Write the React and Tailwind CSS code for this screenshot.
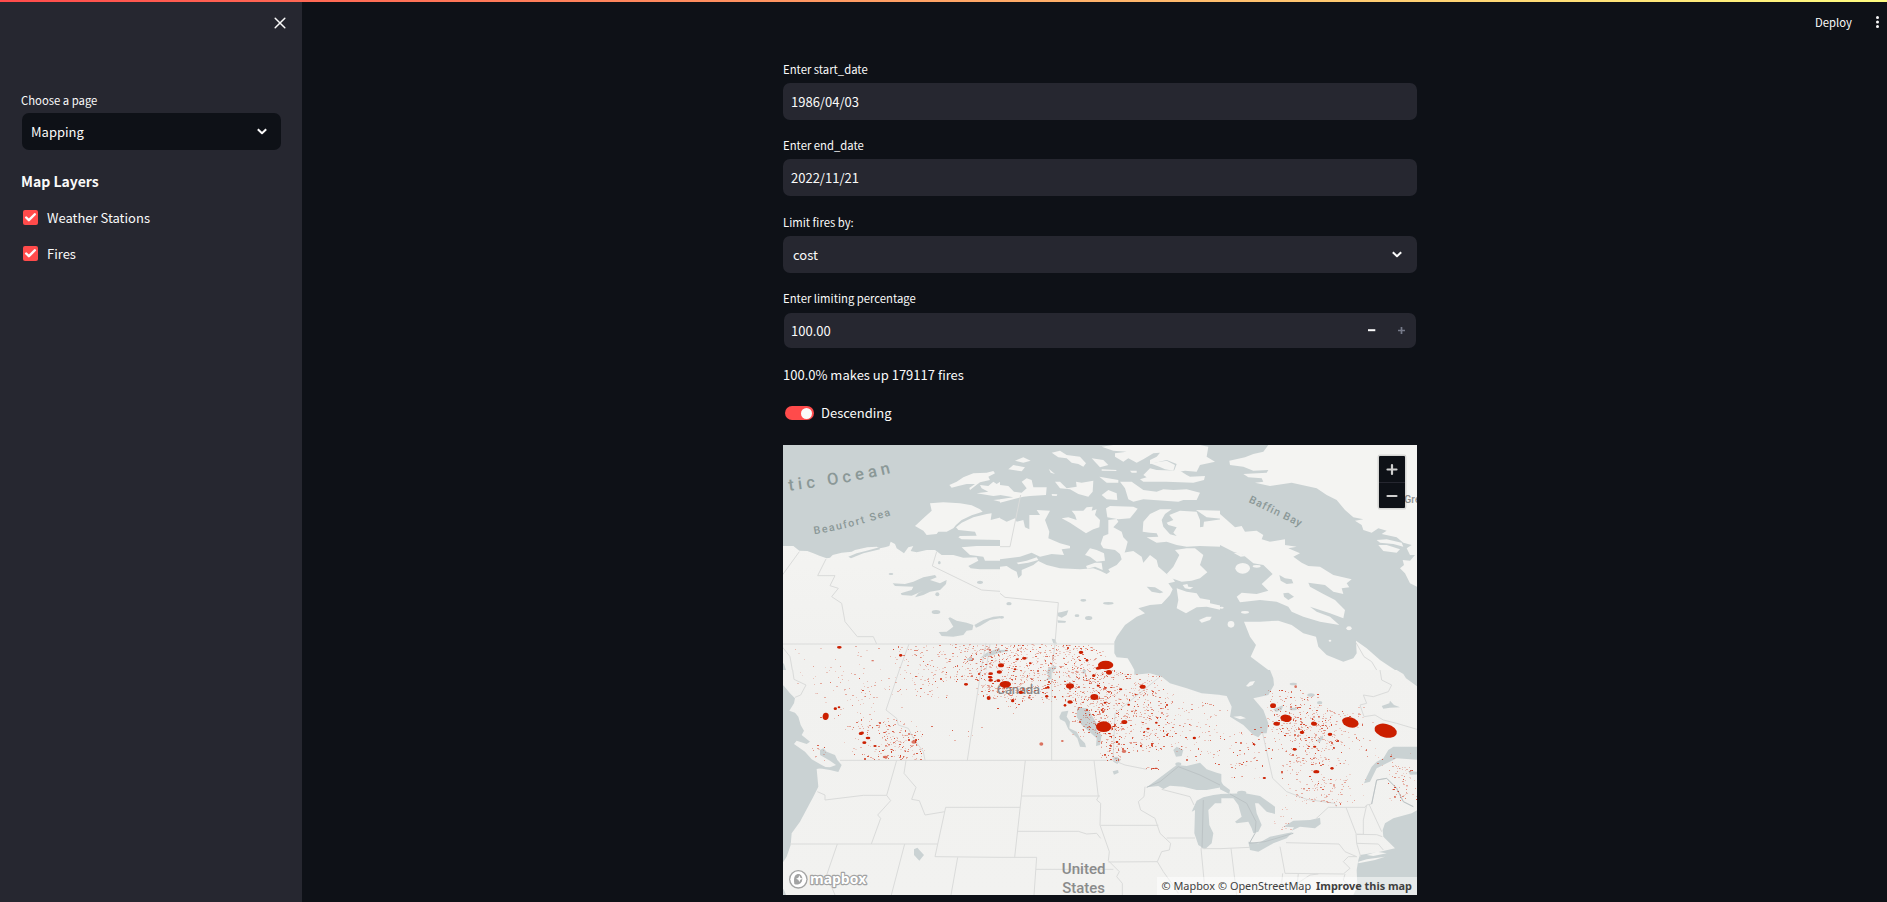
import { Check } from "lucide-react";

const WATER = "#cad2d3";
const LAND = "#f4f4f2";

// Closed outlines, each from an "x,y x,y" list
function Shapes({ fill, list }) {
  return list.map((points, i) => <polygon key={i} points={points} fill={fill} />);
}

function Lines({ list, stroke = "#dadbda", width = 3 }) {
  return list.map((points, i) => (
    <polyline key={i} points={points} fill="none" stroke={stroke} strokeWidth={width} strokeLinejoin="round" />
  ));
}

function Ponds({ list, fill = WATER }) {
  return list.map(([cx, cy, rx, ry], i) => <ellipse key={i} cx={cx} cy={cy} rx={rx} ry={ry} fill={fill} />);
}

// The map is cut in six tiles, each with its own origin
const northWest = {
  water: [
    "0,0 664,0 664,388 600,388 572,385 565,378 595,362 590,352 550,353 520,345 485,345 465,330 440,330 410,337 392,333 400,318 385,322 372,340 350,325 345,312 332,305 328,318 315,322 300,325 290,320 262,322 225,330 215,335 185,338 158,345 150,353 140,355 120,348 100,340 82,333 58,332 40,318 0,318",
    "205,350 230,340 260,332 298,322 300,328 250,340 213,355",
    "338,430 375,432 400,425 430,412 465,405 470,412 450,420 480,430 500,420 498,432 480,450 450,455 430,465 405,472 415,460 430,452 395,467 365,465 362,460 395,450 400,440 345,438",
    "476,576 500,575 520,560 505,535 510,532 530,542 560,548 580,555 577,570 560,572 550,585 520,590 485,588",
    "583,555 610,540 640,530 664,528 664,534 630,540 600,558 588,563",
    "600,654 620,638 650,627 664,625 664,636 640,645 615,650",
    "0,660 12,672 18,690 0,690",
  ],
  land: [
    "405,258 430,235 455,212 450,190 490,187 540,190 575,196 600,208 608,215 575,226 545,240 528,255 520,265 500,275 475,275 470,282 440,285 430,272",
    "528,262 545,248 580,232 620,222 635,220 632,240 664,232 664,300 545,298 535,292 540,288 590,287 585,275 535,270",
    "545,322 590,318 664,318 664,362 615,362 610,350 570,345",
    "508,135 530,125 550,112 580,100 620,98 640,93 645,100 625,110 630,120 600,127 570,150 568,144 585,132 560,132 535,138 515,143",
    "590,160 625,155 605,145 600,135 625,138 640,125 650,132 664,123 664,165 640,168",
    "640,180 664,178 664,186",
  ],
  ponds: [[333, 402, 7, 3], [472, 463, 6, 6], [600, 427, 9, 5], [478, 368, 4, 5], [468, 516, 13, 6], [570, 658, 9, 5]],
  lines: [
    "0,415 58,335",
    "138,357 113,407 165,407 150,437 175,445 155,470 185,490 195,545 232,590 280,590 290,612",
    "0,612 660,612",
    "470,335 457,378 605,450 660,454",
    "387,612 358,690",
    "0,612 30,650 37,690",
    "618,690 630,612",
  ],
};

const north = {
  water: ["0,0 664,0 664,690 0,690"],
  land: [
    "0,380 20,378 35,388 50,395 55,415 65,405 65,390 100,375 115,363 140,375 180,385 240,388 280,385 300,392 320,402 330,395 325,388 350,375 365,358 360,342 370,338 400,333 425,350 430,368 450,345 470,360 475,380 500,402 515,410 525,425 505,430 518,448 510,465 485,492 450,495 415,505 435,520 410,530 375,555 350,590 343,605 343,640 350,652 383,655 395,675 403,690 0,690",
    "0,235 20,245 45,235 50,245 70,240 75,262 88,268 88,225 120,225 110,210 150,212 135,240 148,275 145,295 180,310 210,318 210,325 185,328 192,345 155,342 120,350 95,338 60,350 0,358",
    "50,368 80,362 110,352 115,360 85,368 55,373",
    "255,345 270,325 290,330 312,340 315,362 290,365 270,350",
    "258,378 285,368 305,368 308,390 285,380 262,386",
    "185,235 205,232 230,240 225,225 215,212 250,212 260,202 278,200 275,212 290,208 285,225 300,240 298,262 280,268 258,280 235,265 210,248",
    "318,205 330,198 400,200 413,206 390,235 355,238 322,232",
    "325,240 350,237 355,245 340,262 365,275 370,292 383,305 378,325 370,350 345,330 310,325 302,312 310,288 325,282",
    "428,275 430,245 450,222 480,208 515,208 495,222 485,240 490,260 510,283 530,288 520,278 530,262 505,255 500,248 520,240 508,225 540,212 590,215 600,240 600,262 610,260 612,245 664,238 664,320 600,318 560,320 530,315 500,305 470,308 440,292 475,290 470,280 450,278",
    "588,210 664,212 664,236 620,232",
    "500,402 520,380 538,345 525,330 560,325 585,325 610,345 605,360 600,375 622,397 600,415 575,422 545,425 515,415",
    "530,445 560,455 590,460 600,475 630,480 630,490 664,497 664,510 620,500 590,502 558,520 530,505 535,480",
    "597,540 620,530 635,530 630,540 605,548",
    "548,435 562,432 565,440 580,442 570,448 555,445",
    "420,118 440,112 430,105 450,85 470,90 540,92 560,105 570,110 615,108 612,120 580,128 500,125 430,125",
    "360,125 395,125 430,150 470,155 490,148 520,150 560,148 600,158 590,180 550,180 535,185 430,178 400,185 385,178 375,145",
    "305,20 340,15 600,15 625,20 620,50 645,65 600,75 590,95 555,92 520,98 530,72 500,60 450,72 450,60 470,50 480,38 460,40 430,58 410,68 385,55 370,65 345,50 345,40 380,35 340,32",
    "450,70 500,62 525,75 520,92 495,88 478,80",
    "155,38 180,32 200,45 240,50 258,70 250,80 235,72 215,68 200,55 175,52",
    "275,55 310,60 325,75 300,82",
    "45,62 70,52 92,62 70,68",
    "25,88 40,75 75,82 65,94",
    "305,88 350,90 348,93 305,92",
    "298,110 355,120 355,128 320,128",
    "0,135 25,138 42,155 65,158 80,145 65,125 80,115 95,120 100,142 140,142 138,165 90,168 70,170 0,188 0,178 40,172 0,165",
    "165,125 180,125 200,145 230,140 228,125 245,128 280,122 278,155 265,170 235,162 210,148 180,145",
    "305,165 325,150 350,160 352,180 320,178",
    "146,86 165,102 152,98",
    "155,162 172,163 170,168 156,167",
    "390,92 410,92 410,98 395,98",
  ],
  lakes: [
    "440,440 465,442 490,457 480,460 455,455",
    "172,518 185,516 205,511 200,525 185,533 173,528",
    "172,541 198,543 196,548 174,548",
    "155,596 165,598 171,612 160,610",
    "140,700 145,684 165,677 170,680 156,700 154,716 135,722 148,708",
    "0,630 22,629 25,634 0,638",
  ],
  ponds: [[27, 491, 8, 5], [250, 481, 9, 4], [325, 490, 16, 4], [231, 527, 7, 4], [266, 534, 11, 6], [5, 532, 7, 4]],
  lines: ["0,460 15,472 175,488 165,612", "62,165 30,320 0,320", "0,612 343,612", "165,612 155,690"],
};

const northEast = {
  water: ["0,0 600,0 600,690 0,690"],
  land: [
    "145,15 130,35 100,42 75,52 28,62 30,75 70,80 100,92 145,90 140,98 70,102 85,112 125,115 130,125 105,128 150,138 215,128 290,145 320,165 350,180 375,210 400,232 430,238 405,242 425,255 430,270 455,278 475,265 500,272 485,282 530,292 550,308 575,315 560,325 570,345 585,345 570,362 548,360 552,375 540,385 555,400 570,430 600,445 600,0 145,0",
    "470,300 500,298 545,308 550,320 520,312 480,308",
    "475,315 500,315 540,328 530,338 490,333",
    "0,222 18,238 45,262 65,258 75,275 110,272 130,285 125,298 150,305 195,298 195,315 230,320 205,325 240,340 220,350 245,368 265,378 300,380 340,405 395,418 380,430 388,442 365,445 370,462 340,455 315,435 265,428 270,440 310,462 345,480 375,510 370,535 330,520 270,500 290,515 330,530 358,555 300,545 250,530 215,515 205,500 170,485 120,480 60,487 50,470 65,458 110,462 145,452 125,432 158,402 130,375 100,370 70,345 40,335 0,315",
    "72,545 120,545 175,542 215,555 250,580 288,590 295,620 320,645 370,665 400,655 410,640 408,602 440,625 480,660 525,690 145,690 92,650 108,615 90,590",
    "40,338 60,340 78,348 62,350",
  ],
  lakes: ["178,405 195,415 215,418 220,430 200,432 182,422", "190,460 205,458 222,470 205,480 192,470"],
  ponds: [[20, 344, 5, 2], [50, 352, 5, 2]],
  islands: [[68, 385, 22, 16], [110, 379, 12, 4], [75, 517, 12, 4], [33, 553, 10, 10], [387, 565, 8, 6], [330, 602, 4, 3], [5, 503, 6, 3]],
  lines: ["408,608 432,650 455,665 470,690"],
};

const southWest = {
  water: [
    "0,40 12,48 30,70 45,85 42,100 28,122 45,128 55,140 62,165 72,182 65,195 90,215 80,222 50,212 42,222 75,245 95,268 125,285 138,292 110,297 115,350 100,380 60,455 35,490 32,525 20,560 0,590",
    "120,240 130,235 140,245 165,255 172,270 185,285 175,306 150,300 118,295 118,290 150,292 168,285 150,272 120,255",
    "402,538 412,533 432,555 418,572 402,555",
    "0,645 12,660 18,675 0,675",
  ],
  land: [],
  ponds: [],
  lines: [
    "180,271 660,271",
    "358,0 318,120 350,145 355,165 385,175 400,205 430,245 435,271",
    "38,0 42,28 78,45 62,75 45,82",
    "350,271 320,376 250,376 135,390 135,375 112,365",
    "320,376 332,392 293,435 302,445 274,522",
    "378,271 372,310 408,352 395,388 418,392 435,435 495,425",
    "660,412 497,412 465,560 660,562",
    "30,522 473,522",
    "172,522 140,615 165,675",
    "374,522 334,675",
    "533,562 513,675",
    "618,-80 603,0 562,271",
  ],
};

const south = {
  water: [
    "403,0 403,14 450,10 485,20 510,40 560,55 605,70 664,75 664,0",
    "232,112 262,115 272,130 290,160 290,180 305,195 300,225 288,228 290,205 262,180 245,165 230,140",
    "178,140 185,125 205,122 200,140 210,155 208,175 230,185 240,205 255,220 258,232 240,230 232,205 205,178 195,155 180,148",
    "520,240 530,230 550,240 545,258 528,260",
    "440,352 470,330 510,300 530,285 560,288 600,278 620,298 650,308 664,312 664,352 620,360 590,360 550,350 510,347 490,357 475,348",
    "575,425 590,392 610,382 640,375 664,372 664,400 645,400 625,420 628,465 640,490 635,520 615,538 595,525 583,490 585,420",
    "338,262 352,260 362,270 352,282 340,275",
    "338,304 354,300 356,308 342,314",
    "248,0 258,0 256,10 248,12",
  ],
  land: [],
  ponds: [[535, 282, 9, 5]],
  lines: [
    "155,0 155,271",
    "0,271 340,271 340,250",
    "340,271 375,285 440,298",
    "340,250 345,130 480,20",
    "76,271 44,562",
    "66,378 300,378",
    "282,271 295,380 290,390 302,400 300,465 328,545 325,572 358,605 350,620 367,640 367,675",
    "0,412 60,412",
    "52,484 235,484 260,492 290,490 302,505",
    "0,562 110,562 102,675",
    "108,598 340,598",
    "302,466 475,466",
    "435,350 432,380 415,395 422,420 465,445 480,490 512,520 508,540 485,545 472,575 325,576",
    "485,358 570,380 582,405",
    "500,504 585,504",
    "603,535 613,640",
    "472,575 490,605 515,640 535,670",
    "608,536 660,536",
  ],
  coastLines: ["440,352 480,335 535,290 600,315 660,345", "610,390 606,535"],
};

const southEast = {
  water: [
    "0,0 0,75 20,78 35,110 30,140 70,165 100,195 115,202 125,190 140,190 145,160 130,120 100,85 145,75 162,45 160,25 150,0",
    "530,0 550,12 558,25 600,55 600,0",
    "432,340 440,320 455,290 470,275 490,265 505,240 520,230 600,230 600,270 530,265 500,280 470,295 450,335",
    "600,415 575,430 520,445 495,460 488,480 490,500 525,535 480,545 420,555 415,570 410,600 412,650 400,675 600,675",
    "0,330 10,345 30,360 28,372 0,358",
    "0,372 75,370 120,378 165,410 165,432 140,425 115,400 105,400 110,430 125,465 115,485 100,490 95,475 85,455 50,460 45,455 65,440 55,405 40,385 0,385",
    "85,515 115,520 150,500 200,490 218,487 200,505 160,520 115,545 90,540",
    "190,470 220,452 270,450 300,443 302,462 285,475 240,470 215,482 222,472",
    "565,303 591,305 600,313 570,314",
    "485,108 508,100 510,92 522,105 540,112 510,113 490,116",
    "290,212 308,196 310,204 298,218",
    "160,118 190,105 185,120 168,126",
  ],
  land: ["415,575 440,568 495,560 465,570 415,580", "78,48 90,35 105,33 98,45 85,50", "40,140 62,138 78,145 60,148", "440,555 470,545 500,550 460,558"],
  ponds: [[220, 42, 11, 4], [273, 75, 11, 5], [299, 98, 8, 5], [220, 117, 11, 4], [65, 368, 14, 6]],
  lines: [
    "128,190 158,325 200,365 260,388 345,400 350,412",
    "287,447 325,412 435,412 440,405 455,402 470,330 500,325 530,355 550,395 580,410",
    "378,412 408,490 410,520 422,560",
    "440,405 430,450 430,493 410,493",
    "448,405 485,485",
    "410,493 470,494 487,500",
    "410,520 475,522 490,540",
    "198,518 357,522 375,545 410,560 385,560 370,575 390,595 370,612 195,610 180,530",
    "33,535 50,675",
    "0,536 90,532",
    "188,610 185,640 165,655",
    "235,610 232,640 270,615 295,612",
    "480,0 485,30 515,45 505,65 460,80 430,75 440,100 420,105 432,140 465,135 490,150 530,160 591,178",
    "375,612 370,630 395,655",
  ],
  coastLines: ["30,372 80,400 108,455 105,490 88,520 135,515 220,490", "455,402 470,330 500,325 530,355 550,395 580,410"],
};

const TILES = [
  [northWest, 0, 0],
  [north, 660, 0],
  [northEast, 1320, 0],
  [southWest, 0, 690],
  [south, 660, 690],
  [southEast, 1320, 690],
];

// Largest fires, in whole-map units: cx, cy, rx, ry, tilt
const BIG_FIRES = [
  [977, 675, 23, 13, 0], [961, 683, 14, 5, -12], [971, 860, 23, 16, 0], [1711, 847, 25, 15, 15], [1817, 872, 34, 20, 14],
  [1518, 835, 17, 11, 8], [1490, 851, 10, 6, 5], [1479, 797, 9, 7, 0], [1602, 851, 9, 6, 10], [1566, 877, 7, 5, 0],
  [1650, 883, 7, 5, 0], [1544, 928, 6, 4, 0], [1609, 995, 9, 5, 0], [1656, 985, 5, 4, 0], [1453, 1014, 5, 3, 0], [1604, 920, 5, 3, 0],
  [676, 733, 17, 10, 0], [870, 738, 12, 8, 0], [943, 771, 12, 9, 0], [1033, 846, 9, 6, 0], [1088, 740, 9, 6, 0],
  [987, 697, 9, 7, 0], [870, 786, 8, 5, 0], [903, 637, 7, 5, 0], [137, 829, 9, 11, 10], [244, 880, 8, 5, -10],
  [264, 894, 7, 4, 0], [253, 908, 6, 4, 0], [285, 918, 5, 3, 0], [178, 622, 7, 4, 0], [362, 646, 5, 4, 0],
  [558, 733, 6, 4, 0], [632, 701, 7, 4, 0], [631, 712, 6, 4, 0], [632, 721, 7, 4, 0], [626, 774, 6, 6, 0], [733, 655, 7, 4, 0],
  [663, 676, 9, 6, 0], [658, 696, 8, 5, 0], [655, 722, 6, 4, 0], [722, 757, 7, 5, 0], [698, 782, 5, 5, 0], [800, 769, 5, 4, 0],
  [804, 742, 4, 4, 0], [1129, 848, 4, 3, 0], [1104, 866, 5, 3, 0], [166, 806, 5, 4, 0], [177, 802, 4, 3, 0], [1046, 794, 4, 3, 0],
  [1022, 748, 5, 3, 0], [941, 707, 5, 4, 0], [921, 661, 4, 4, 0], [955, 737, 5, 3, 0], [855, 796, 4, 4, 0], [1243, 894, 5, 4, 0],
  [1011, 906, 4, 3, 0], [975, 788, 4, 3, 0], [1421, 912, 3, 3, 0], [712, 658, 4, 3, 0], [751, 670, 4, 3, 0], [705, 688, 4, 3, 0],
];
const PALE_FIRES = [[402, 906, 8, 5], [316, 951, 8, 4], [784, 912, 6, 5], [1032, 934, 7, 5], [847, 903, 4, 3], [1547, 740, 4, 4], [748, 773, 4, 3], [278, 662, 4, 2]];

// Fire density zones: x, y, width, height, count, share of strong marks
const ZONES = [
  [20, 612, 340, 120, 45, 0.1], [100, 720, 260, 150, 70, 0.1], [200, 840, 235, 118, 130, 0.3], [310, 870, 125, 88, 75, 0.4],
  [75, 910, 70, 50, 12, 0.3], [340, 612, 160, 160, 110, 0.2], [470, 612, 180, 110, 140, 0.25], [590, 612, 230, 165, 430, 0.25],
  [640, 760, 120, 60, 25, 0.3], [780, 612, 190, 175, 320, 0.22], [890, 690, 160, 180, 270, 0.35], [860, 770, 120, 120, 70, 0.25],
  [955, 850, 70, 110, 100, 0.4], [1000, 745, 190, 190, 250, 0.3], [1130, 780, 200, 180, 100, 0.25], [1020, 700, 120, 70, 60, 0.15],
  [1300, 860, 170, 160, 70, 0.3], [1460, 750, 150, 150, 170, 0.4], [1500, 810, 210, 165, 230, 0.28], [1590, 800, 190, 140, 80, 0.2],
  [1520, 1015, 170, 75, 80, 0.06], [1820, 975, 90, 110, 60, 0.2], [1480, 1100, 70, 70, 15, 0.05], [1600, 1000, 170, 95, 45, 0.07],
  [1760, 940, 140, 55, 20, 0.2], [1100, 980, 45, 9, 12, 0.7], [500, 860, 150, 80, 7, 0.2], [1470, 950, 150, 80, 25, 0.1],
];

function scatter() {
  let seed = 42;
  const next = () => {
    seed = (seed * 1664525 + 1013904223) >>> 0;
    return seed / 4294967296;
  };
  const marks = [];
  ZONES.forEach(([x, y, w, h, count, strong]) => {
    for (let i = 0; i < count; i++) {
      // Two draws per axis soften the sides of each zone
      const across = ((next() + next()) / 2 - 0.5) * 1.2 + 0.5;
      const isStrong = next() < strong;
      marks.push({
        x: Math.round((x + across * w) / 3) * 3,
        y: Math.round((y + next() * h) / 3) * 3,
        w: next() < 0.4 ? 6 : 3,
        h: isStrong && next() < 0.15 ? 6 : 3,
        o: isStrong ? 0.4 + next() * 0.4 : 0.12 + next() * 0.25,
      });
    }
  });
  return marks;
}

const MARKS = scatter();

function FireMap() {
  return (
    <svg className="block h-[450px] w-[634px]" viewBox="9 15 1902 1350">
      <defs>
        <path id="arctic" d="M27,152 Q190,135 370,90" />
        <path id="beaufort" d="M103,283 Q200,268 345,222" />
        <path id="baffin" d="M1405,186 L1600,280" />
        <linearGradient id="ground" x1="0" y1="0" x2="0" y2="1">
          <stop offset="0" stopColor="#f6f6f4" />
          <stop offset=".45" stopColor="#f1f1ef" />
          <stop offset="1" stopColor="#f2f2f0" />
        </linearGradient>
      </defs>
      <rect x="0" y="0" width="1920" height="1380" fill="url(#ground)" />
      {TILES.map(([tile, x, y], i) => (
        <g key={i} transform={`translate(${x} ${y})`}>
          <Shapes fill={WATER} list={tile.water} />
          <Shapes fill={LAND} list={tile.land} />
          <Shapes fill={WATER} list={tile.lakes || []} />
          <Ponds list={tile.ponds} />
          <Ponds list={tile.islands || []} fill={LAND} />
          <Lines list={tile.lines} />
          <Lines list={tile.coastLines || []} stroke="#bcc3c5" />
        </g>
      ))}
      <g fontFamily="Roboto, sans-serif" fontWeight="500" fill="#8a9897">
        <text fontSize="50" letterSpacing="12.5"><textPath href="#arctic">tic Ocean</textPath></text>
        <text fontSize="32" letterSpacing="4.6"><textPath href="#beaufort">Beaufort Sea</textPath></text>
        <text fontSize="32" letterSpacing="2.7"><textPath href="#baffin">Baffin Bay</textPath></text>
        <text x="1873" y="190" fontSize="31" fill="#8b8d8e">Gre</text>
      </g>
      <g fontFamily="Roboto, sans-serif" fontWeight="500" fill="#8a8b8b" textAnchor="middle">
        <text x="715" y="763" fontSize="39" textLength="130">Canada</text>
        <text x="911" y="1301" fontSize="46" textLength="131" lengthAdjust="spacingAndGlyphs">United</text>
        <text x="911" y="1359" fontSize="46" textLength="128" lengthAdjust="spacingAndGlyphs">States</text>
      </g>
      <g fill="#cb1f00">
        {MARKS.map((m, i) => (
          <rect key={i} x={m.x} y={m.y} width={m.w} height={m.h} opacity={m.o} />
        ))}
        {BIG_FIRES.map(([cx, cy, rx, ry, tilt], i) => (
          <ellipse key={i} cx={cx} cy={cy} rx={rx} ry={ry} transform={`rotate(${tilt} ${cx} ${cy})`} />
        ))}
        {PALE_FIRES.map(([cx, cy, rx, ry], i) => (
          <ellipse key={i} cx={cx} cy={cy} rx={rx} ry={ry} opacity=".6" />
        ))}
      </g>
      <circle cx="55" cy="1318" r="28" fill="#a2a3a3" />
      <circle cx="55" cy="1318" r="24" fill="#fff" />
      <path d="M43,1332 C39,1306 49,1301 58,1302 A15,15 0 1 1 43,1332 Z" fill="#a2a3a3" />
      <path d="M58,1306 L61,1313 68,1316 61,1319 58,1326 55,1319 48,1316 55,1313 Z" fill="#fff" />
      <text
        x="90" y="1332" fontSize="43" fontWeight="700" fontFamily="'Open Sans', sans-serif" textLength="169" lengthAdjust="spacingAndGlyphs"
        fill="#fff" stroke="#a2a3a3" strokeWidth="7" strokeLinejoin="round" paintOrder="stroke"
      >
        mapbox
      </text>
    </svg>
  );
}

function Chevron() {
  return (
    <svg className="h-[7px] w-[10px]" viewBox="0 0 10 7" fill="none" stroke="#fafafa" strokeWidth="2">
      <path d="M.8,1.2 L5,5.2 L9.2,1.2" strokeLinejoin="round" />
    </svg>
  );
}

function Label({ children }) {
  return <div className="h-[25px] text-[11.3px] leading-[22px]">{children}</div>;
}

function CheckRow({ children }) {
  return (
    <div className="flex h-9 items-center gap-[9px] pl-px">
      <span className="mb-[2px] flex size-[15px] items-center justify-center rounded-[2px] bg-[#ff4b4b]">
        <Check size={13} strokeWidth={4.5} color="#fafafa" />
      </span>
      <span className="text-[13px] leading-5">{children}</span>
    </div>
  );
}

export default function App() {
  return (
    <div className="flex h-[902px] w-[1887px] flex-col overflow-hidden bg-[#0e1117] font-['Noto_Sans_CJK_SC','Noto_Sans',sans-serif] text-[13px] text-[#fafafa]">
      <div className="h-[2px] shrink-0 bg-linear-to-r/srgb from-[#ff4b4b] to-[#fffd80]" />
      <div className="flex min-h-0 flex-1">
        <aside className="w-[302px] shrink-0 bg-[#262730] pr-[21px] pl-[22px]">
          <div className="flex h-[87px] justify-end pt-[15px]">
            <svg className="-mr-[5px] size-[12px]" viewBox="0 0 12 12" stroke="#fafafa" strokeWidth="1.5" strokeLinecap="round">
              <path d="M1.2,1.2 L10.8,10.8 M10.8,1.2 L1.2,10.8" />
            </svg>
          </div>
          <div className="-ml-px h-6 text-[11.3px] leading-[22px]">Choose a page</div>
          <div className="flex h-[37px] items-center justify-between rounded-[7px] bg-[#0e1117] pr-[14px] pl-[9px]">
            <span>Mapping</span>
            <Chevron />
          </div>
          <h3 className="mt-[19px] mb-[7px] -ml-px h-6 text-[14px] leading-[24px] font-semibold">Map Layers</h3>
          <CheckRow>Weather Stations</CheckRow>
          <CheckRow>Fires</CheckRow>
        </aside>
        <main className="flex flex-1 flex-col">
          <header className="flex h-[54px] shrink-0 items-start justify-end pt-[10px] pr-[8px]">
            <span className="mr-6 text-[11.3px] leading-5">Deploy</span>
            <svg className="mt-1 h-3 w-[3px]" viewBox="0 0 3 12" fill="#fafafa">
              <circle cx="1.5" cy="1.6" r="1.5" />
              <circle cx="1.5" cy="6" r="1.5" />
              <circle cx="1.5" cy="10.4" r="1.5" />
            </svg>
          </header>
          <div className="ml-[481px] w-[634px]">
            <div className="h-[76px] pt-[2px]">
              <Label>Enter start_date</Label>
              <div className="flex h-[37px] items-center rounded-[7px] bg-[#262730] pl-2">1986/04/03</div>
            </div>
            <div className="h-[76px] pt-[2px]">
              <Label>Enter end_date</Label>
              <div className="flex h-[37px] items-center rounded-[7px] bg-[#262730] pl-2">2022/11/21</div>
            </div>
            <div className="h-[76px] pt-[3px]">
              <Label>Limit fires by:</Label>
              <div className="flex h-[37px] items-center justify-between rounded-[7px] bg-[#262730] pr-[15px] pl-[10px]">
                <span>cost</span>
                <Chevron />
              </div>
            </div>
            <div className="h-[78px] pt-[3px]">
              <Label>Enter limiting percentage</Label>
              <div className="mx-px mt-px flex h-[35px] items-center rounded-[7px] bg-[#262730] pr-[11px] pl-[7px]">
                <span className="flex-1">100.00</span>
                <svg className="h-[7px] w-[37px]" viewBox="0 0 37 7" fill="none">
                  <path d="M0,3.2 H7.3" stroke="#fafafa" strokeWidth="2" />
                  <path d="M30,3.5 H37 M33.5,0 V7" stroke="#767a89" strokeWidth="1.7" />
                </svg>
              </div>
            </div>
            <p className="mt-[2px] h-[34px] leading-[22px]">100.0% makes up 179117 fires</p>
            <div className="flex h-[47px] items-start gap-[7px] pl-[2px]">
              <span className="mt-2 flex h-[14px] w-[29px] items-center justify-end rounded-full bg-[#ff4b4b] pr-[2px]">
                <span className="size-[11px] rounded-full bg-[#fafafa]" />
              </span>
              <span className="mt-[5px] leading-5">Descending</span>
            </div>
            <div className="relative h-[450px] overflow-hidden">
              <FireMap />
              <div className="absolute top-[11px] right-[12px] h-[52px] w-[26px] rounded-[1px] bg-[#0e1117] shadow-[0_0_0_1.5px_rgba(0,0,0,0.12)]">
                <svg className="block" width="26" height="52" viewBox="0 0 26 52" fill="none">
                  <path d="M0,26.5 H26" stroke="#262730" />
                  <path d="M8.5,13.5 H17.5 M13,9 V18 M8.5,40 H17.5" stroke="#cfcfcf" strokeWidth="2.2" strokeLinecap="round" />
                </svg>
              </div>
              <div className="absolute right-0 bottom-0 flex h-[18px] items-center bg-white/50 px-[5px] font-['Noto_Sans',sans-serif] text-[10.9px] whitespace-nowrap text-[#404040]">
                <span>© Mapbox</span>
                <span className="ml-[3px]">© OpenStreetMap</span>
                <span className="ml-[5px] font-bold">Improve this map</span>
              </div>
            </div>
          </div>
        </main>
      </div>
    </div>
  );
}
